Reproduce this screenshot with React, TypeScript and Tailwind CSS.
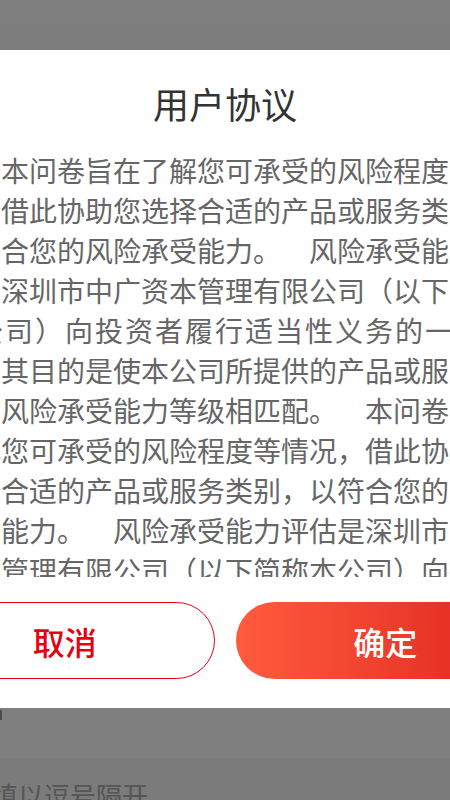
import React from "react";

// The agreement text, broken where the dialog's 20-character measure breaks it.
const LINES: { text: string; loose?: boolean }[] = [
  { text: "本问卷旨在了解您可承受的风险程度等情" },
  { text: "况，借此协助您选择合适的产品或服务类别，" },
  { text: "以符合您的风险承受能力。\u3000风险承受能力评" },
  { text: "估是深圳市中广资本管理有限公司（以下简称" },
  { text: "本公司）向投资者履行适当性义务的一个环", loose: true },
  { text: "节，其目的是使本公司所提供的产品或服务与" },
  { text: "您的风险承受能力等级相匹配。\u3000本问卷旨在" },
  { text: "了解您可承受的风险程度等情况，借此协助您" },
  { text: "选择合适的产品或服务类别，以符合您的风险" },
  { text: "承受能力。\u3000风险承受能力评估是深圳市中广" },
  { text: "资本管理有限公司（以下简称本公司）向投资" },
  { text: "者履行适当性义务的一个环节，其目的是使本" },
];

export default function App() {
  return (
    <div className="relative h-[800px] w-[450px] overflow-hidden bg-white font-['Noto_Sans_CJK_SC','Noto_Sans',sans-serif]">
      {/* Page underneath the dialog */}
      <div className="flex h-full flex-col">
        <div className="h-[27px] bg-white" />
        <div className="h-[23px] bg-[#fafafa]" />
        <div className="flex-1 bg-white" />
        <div className="h-[50px] bg-white">
          <div className="mt-[2px] h-[10px] w-[2px] bg-[#999]" />
        </div>
        <div className="h-[42px] bg-[#f6f6f6] pt-[24px]">
          <p className="ml-[-8px] whitespace-nowrap text-[26px] leading-none text-[#aaa]">
            填以逗号隔开
          </p>
        </div>
      </div>

      {/* Mask */}
      <div className="absolute inset-0 bg-black/50" />

      {/* Dialog */}
      <div className="absolute inset-0 flex items-start justify-center pt-[50px]">
        <div className="w-[680px] shrink-0 bg-white pt-[28px] pb-[29px]">
          <h2 className="text-center text-[36px] leading-[50px] font-normal text-[#333]">
            用户协议
          </h2>

          <div className="mt-[22px] h-[427px] overflow-hidden px-[60px]">
            <div className="text-[28px] leading-[40px] text-[#666] [text-spacing-trim:space-all]">
              {LINES.map((line, i) => (
                <div
                  key={i}
                  className={`whitespace-nowrap ${i === 0 ? "pl-[2em]" : ""} ${
                    line.loose ? "tracking-[2px]" : ""
                  }`}
                >
                  {line.text}
                </div>
              ))}
            </div>
          </div>

          <div className="mt-[25px] grid grid-cols-2 gap-[21px] px-[30px]">
            <button className="h-[77px] rounded-full border border-[#e60012] bg-white text-[32px] font-medium text-[#e60012]">
              取消
            </button>
            <button className="h-[77px] rounded-full bg-linear-to-r from-[#ff5b3d] to-[#dc1a1c] text-[32px] font-medium text-white">
              确定
            </button>
          </div>
        </div>
      </div>
    </div>
  );
}
